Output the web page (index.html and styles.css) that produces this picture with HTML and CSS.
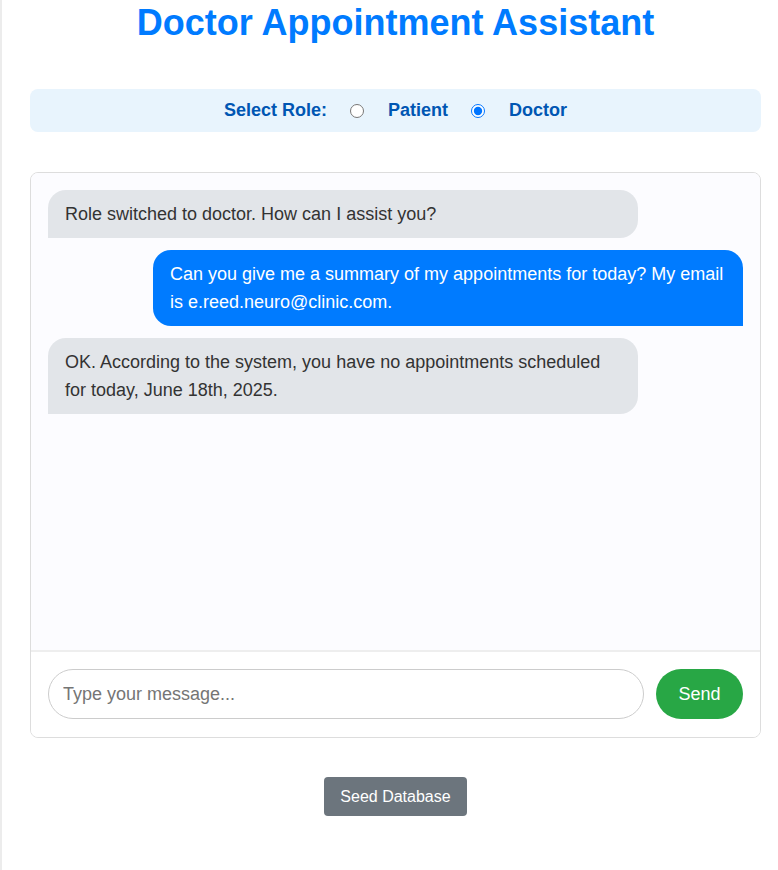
FILE: index.html
```html
<!DOCTYPE html>
<html>
<head>
<meta charset="utf-8">
<link rel="stylesheet" href="styles.css">
</head>
<body>
<div class="page">
  <h1 class="title">Doctor Appointment Assistant</h1>
  <div class="role-bar">
    <span class="role-label">Select Role:</span>
    <label class="role-opt"><input type="radio" name="role">Patient</label>
    <label class="role-opt"><input type="radio" name="role" checked>Doctor</label>
  </div>
  <div class="chat">
    <div class="messages">
      <div class="msg bot">Role switched to doctor. How can I assist you?</div>
      <div class="msg user">Can you give me a summary of my appointments for today? My email is e.reed.neuro@clinic.com.</div>
      <div class="msg bot">OK. According to the system, you have no appointments scheduled for today, June 18th, 2025.</div>
    </div>
    <div class="input-row">
      <input class="msg-input" type="text" placeholder="Type your message...">
      <button class="send">Send</button>
    </div>
  </div>
  <div class="seed-wrap"><button class="seed">Seed Database</button></div>
</div>
</body>
</html>
```
FILE: styles.css
```css
html, body { margin: 0; padding: 0; background: #fff; }
body { font-family: "Liberation Sans", Arial, sans-serif; border-left: 2px solid #ececec; min-height: 870px; box-sizing: border-box; }
.page { padding: 0 15px 0 28px; width: 731px; }
.title { margin: 0; padding-top: 3px; text-align: center; color: #007bff; font-size: 36px; font-weight: bold; line-height: 40px; }
.role-bar { margin-top: 46px; height: 43px; background: #e8f4fd; border-radius: 8px; display: flex; align-items: center; justify-content: center; color: #0056b3; font-weight: bold; font-size: 18px; }
.role-opt { display: flex; align-items: center; }
.role-opt input { margin: 0 24px 0 23px; width: 14px; height: 14px; }
.chat { margin-top: 40px; border: 1px solid #ddd; border-radius: 8px; overflow: hidden; }
.messages { height: 477px; background: #fcfcff; padding: 17px; box-sizing: border-box; display: flex; flex-direction: column; gap: 12px; }
.msg { box-sizing: border-box; padding: 10px 17px; font-size: 18px; line-height: 28px; border-radius: 18px; }
.msg.bot { align-self: flex-start; width: 590px; background: #e2e5e9; color: #333; border-bottom-left-radius: 0; }
.msg.user { align-self: flex-end; width: 590px; background: #007bff; color: #fff; border-bottom-right-radius: 0; }
.input-row { border-top: 2px solid #eee; padding: 17px 17px 18px; display: flex; gap: 12px; background: #fff; }
.msg-input { flex: 1; height: 50px; box-sizing: border-box; border: 1px solid #ccc; border-radius: 25px; padding: 0 14px; font-size: 18px; font-family: "Liberation Sans", Arial, sans-serif; color: #333; outline: none; }
.msg-input::placeholder { color: #757575; }
.send { width: 87px; height: 50px; border: none; border-radius: 25px; background: #28a745; color: #fff; font-size: 18px; font-family: "Liberation Sans", Arial, sans-serif; }
.seed-wrap { display: flex; justify-content: center; margin-top: 39px; }
.seed { width: 143px; height: 39px; border: none; border-radius: 4px; background: #6c757d; color: #fff; font-size: 16px; font-family: "Liberation Sans", Arial, sans-serif; }
```
